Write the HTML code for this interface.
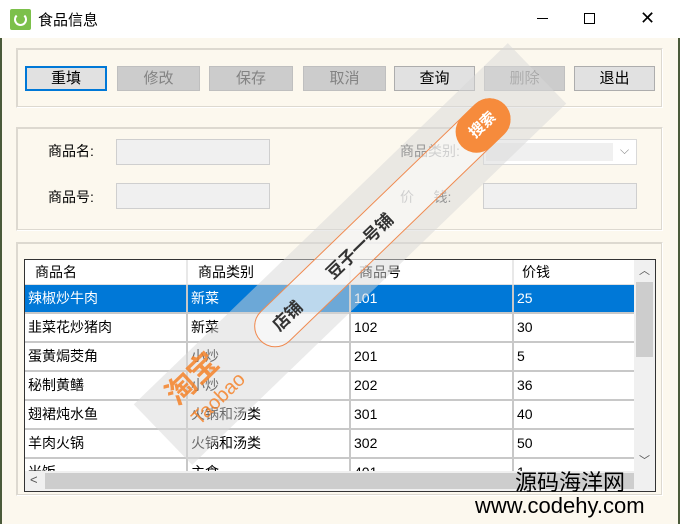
<!DOCTYPE html>
<html><head><meta charset="utf-8"><style>
*{box-sizing:border-box;margin:0;padding:0}
body{width:680px;height:524px;overflow:hidden;background:#fcf8ee;font-family:"Liberation Sans","Noto Sans CJK SC",sans-serif;font-size:14px;position:relative;color:#000}
.a{position:absolute}
.title{left:0;top:0;width:680px;height:38px;background:#fff}
.grp{border:1px solid #ddd9d0;border-right-color:#fff;border-bottom-color:#fff;box-shadow:1px 1px 0 #ddd9d0 inset, -1px -1px 0 #ddd9d0 inset}
.btn{height:25px;top:66px;border:1px solid #adadad;background:#e1e1e1;text-align:center;line-height:23px;font-size:15px}
.dis{background:#cccccc;border-color:#bfbfbf;color:#838383}
.inp{background:#f0f0f0;border:1px solid #cfcfcf;height:26px;width:154px}
.lbl{font-size:14px}
.grid{left:24px;top:259px;width:632px;height:233px;border:1px solid #333;background:#fff;overflow:hidden}
.row{position:absolute;left:0;width:609px;height:29px;border-bottom:2px solid #c8c8c8}
.c{position:absolute;top:0;height:100%;border-right:2px solid #c8c8c8;padding-left:3px;line-height:27px;font-size:14px;white-space:nowrap}
</style></head><body>
<div class="a title"></div>
<div class="a" style="left:0;top:38px;width:2px;height:486px;background:#4a5a3a"></div>
<div class="a" style="left:678px;top:38px;width:2px;height:486px;background:#4a5a3a"></div>
<div class="a" style="left:10px;top:9px;width:21px;height:21px;background:#7cc04b;border-radius:2px"><div class="a" style="left:4px;top:4px;width:13px;height:13px;border:2px solid #fff;border-radius:50%;border-top-color:transparent"></div></div>
<div class="a" style="left:38px;top:9px;font-size:15px">食品信息</div>
<div class="a" style="left:537px;top:18px;width:11px;height:1px;background:#000"></div>
<div class="a" style="left:584px;top:13px;width:11px;height:11px;border:1px solid #000"></div>
<div class="a" style="left:640px;top:8px;font-size:18px;line-height:20px">✕</div>

<div class="a grp" style="left:16px;top:48px;width:647px;height:60px"></div>
<div class="a btn" style="left:25px;width:82px;border:2px solid #0078d7;line-height:21px">重填</div>
<div class="a btn dis" style="left:117px;width:83px">修改</div>
<div class="a btn dis" style="left:209px;width:84px">保存</div>
<div class="a btn dis" style="left:303px;width:83px">取消</div>
<div class="a btn" style="left:394px;width:81px">查询</div>
<div class="a btn dis" style="left:484px;width:81px">删除</div>
<div class="a btn" style="left:574px;width:81px">退出</div>

<div class="a grp" style="left:16px;top:127px;width:647px;height:104px"></div>
<div class="a lbl" style="left:48px;top:141px">商品名:</div>
<div class="a inp" style="left:116px;top:139px"></div>
<div class="a lbl" style="left:48px;top:187px">商品号:</div>
<div class="a inp" style="left:116px;top:183px"></div>
<div class="a lbl" style="left:400px;top:141px;color:#555">商品类别:</div>
<div class="a" style="left:483px;top:139px;width:154px;height:26px;background:#fff;border:1px solid #d9d9d9"><div class="a" style="left:2px;top:3px;width:127px;height:18px;background:#f0f0f0"></div><div class="a" style="left:136px;top:3px;color:#888;font-size:12px">⌵</div></div>
<div class="a lbl" style="left:400px;top:187px;color:#555">价&nbsp;&nbsp;&nbsp;&nbsp;&nbsp;钱:</div>
<div class="a inp" style="left:483px;top:183px"></div>

<div class="a grp" style="left:16px;top:242px;width:647px;height:254px"></div>
<div class="a grid">
 <div class="row" style="top:0;height:25px;border-bottom:1px solid #e0e0e0"><div class="c" style="left:0;width:163px;padding-left:10px;line-height:24px;border-right-color:#e8e8e8">商品名</div><div class="c" style="left:163px;width:163px;padding-left:10px;line-height:24px;border-right-color:#e8e8e8">商品类别</div><div class="c" style="left:326px;width:163px;padding-left:8px;line-height:24px;border-right-color:#e8e8e8">商品号</div><div class="c" style="left:489px;width:120px;padding-left:8px;line-height:24px;border:0">价钱</div></div>
 <div class="row" style="top:25px;background:#0078d7;color:#fff"><div class="c" style="left:0;width:163px">辣椒炒牛肉</div><div class="c" style="left:163px;width:163px">新菜</div><div class="c" style="left:326px;width:163px">101</div><div class="c" style="left:489px;width:120px;border:0">25</div></div>
 <div class="row" style="top:54px"><div class="c" style="left:0;width:163px">韭菜花炒猪肉</div><div class="c" style="left:163px;width:163px">新菜</div><div class="c" style="left:326px;width:163px">102</div><div class="c" style="left:489px;width:120px;border:0">30</div></div>
 <div class="row" style="top:83px"><div class="c" style="left:0;width:163px">蛋黄焗茭角</div><div class="c" style="left:163px;width:163px">小炒</div><div class="c" style="left:326px;width:163px">201</div><div class="c" style="left:489px;width:120px;border:0">5</div></div>
 <div class="row" style="top:112px"><div class="c" style="left:0;width:163px">秘制黄鳝</div><div class="c" style="left:163px;width:163px">小炒</div><div class="c" style="left:326px;width:163px">202</div><div class="c" style="left:489px;width:120px;border:0">36</div></div>
 <div class="row" style="top:141px"><div class="c" style="left:0;width:163px">翅裙炖水鱼</div><div class="c" style="left:163px;width:163px">火锅和汤类</div><div class="c" style="left:326px;width:163px">301</div><div class="c" style="left:489px;width:120px;border:0">40</div></div>
 <div class="row" style="top:170px"><div class="c" style="left:0;width:163px">羊肉火锅</div><div class="c" style="left:163px;width:163px">火锅和汤类</div><div class="c" style="left:326px;width:163px">302</div><div class="c" style="left:489px;width:120px;border:0">50</div></div>
 <div class="row" style="top:199px"><div class="c" style="left:0;width:163px">米饭</div><div class="c" style="left:163px;width:163px">主食</div><div class="c" style="left:326px;width:163px">401</div><div class="c" style="left:489px;width:120px;border:0">1</div></div>
 <div class="a" style="left:609px;top:0;width:21px;height:211px;background:#f0f0f0"><div class="a" style="left:2px;top:22px;width:17px;height:75px;background:#cdcdcd"></div><div class="a" style="left:5px;top:2px;font-size:11px;color:#555">︿</div><div class="a" style="left:5px;top:192px;font-size:11px;color:#555">﹀</div></div>
 <div class="a" style="left:0;top:211px;width:609px;height:20px;background:#f0f0f0"><div class="a" style="left:20px;top:2px;width:589px;height:16px;background:#cdcdcd"></div><div class="a" style="left:5px;top:1px;font-size:13px;color:#555">&lt;</div></div>
 <div class="a" style="left:609px;top:211px;width:21px;height:20px;background:#f0f0f0"></div>
</div>

<div class="a" style="left:90px;top:212px;width:520px;height:84px;transform:rotate(-44deg);background:rgba(215,215,215,0.5)">
 <div class="a" style="left:135px;top:21px;width:340px;height:42px;border:1px solid #f08a50;border-radius:21px;background:rgba(255,255,255,0.55)"></div>
 <div class="a" style="left:415px;top:21px;width:60px;height:42px;border-radius:21px;background:#f68b3c;color:#fff;font-size:15px;text-align:center;line-height:42px;font-weight:bold">搜索</div>
 <div class="a" style="left:155px;top:29px;font-size:17px;font-weight:bold;color:#333">店铺</div>
 <div class="a" style="left:230px;top:29px;font-size:17px;font-weight:bold;color:#333">豆子一号铺</div>
 <div class="a" style="left:30px;top:6px;font-size:30px;font-weight:bold;color:#f5832a;opacity:.85;line-height:34px">淘宝</div>
 <div class="a" style="left:32px;top:44px;font-size:20px;color:#f5832a;opacity:.85">Taobao</div>
</div>

<div class="a" style="left:515px;top:470px;font-size:22px;line-height:26px">源码海洋网</div>
<div class="a" style="left:475px;top:494px;font-size:22px;line-height:24px">www.codehy.com</div>
</body></html>
